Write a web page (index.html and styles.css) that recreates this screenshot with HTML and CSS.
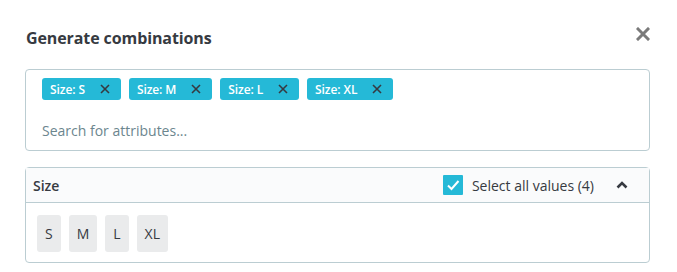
FILE: index.html
```html
<!DOCTYPE html>
<html>
<head>
<meta charset="utf-8">
<link rel="stylesheet" href="styles.css">
</head>
<body>
<div class="modal">
  <div class="head">
    <h2 class="title">Generate combinations</h2>
    <button class="close" aria-label="Close">
      <svg width="14" height="14" viewBox="0 0 14 14"><path d="M2 2 L12 12 M12 2 L2 12" stroke="#7a7a7a" stroke-width="3" stroke-linecap="square"/></svg>
    </button>
  </div>
  <div class="tagbox">
    <div class="tags">
      <span class="tag">Size: S<svg class="x" width="10" height="10" viewBox="0 0 10 10"><path d="M1 1 L9 9 M9 1 L1 9" stroke="#363a41" stroke-width="1.6"/></svg></span>
      <span class="tag">Size: M<svg class="x" width="10" height="10" viewBox="0 0 10 10"><path d="M1 1 L9 9 M9 1 L1 9" stroke="#363a41" stroke-width="1.6"/></svg></span>
      <span class="tag">Size: L<svg class="x" width="10" height="10" viewBox="0 0 10 10"><path d="M1 1 L9 9 M9 1 L1 9" stroke="#363a41" stroke-width="1.6"/></svg></span>
      <span class="tag">Size: XL<svg class="x" width="10" height="10" viewBox="0 0 10 10"><path d="M1 1 L9 9 M9 1 L1 9" stroke="#363a41" stroke-width="1.6"/></svg></span>
    </div>
    <div class="search">Search for attributes...</div>
  </div>
  <div class="card">
    <div class="card-head">
      <span class="card-title">Size</span>
      <div class="card-actions">
        <span class="check"><svg width="20" height="20" viewBox="0 0 20 20"><rect width="20" height="20" rx="1" fill="#25b9d7"/><path d="M5 10.5 L8.5 14 L15.5 6" stroke="#fff" stroke-width="2" fill="none"/></svg></span>
        <span class="check-label">Select all values (4)</span>
        <svg class="chev" width="14" height="10" viewBox="0 0 14 10"><path d="M2.5 7.5 L7 3 L11.5 7.5" stroke="#363a41" stroke-width="2.6" fill="none"/></svg>
      </div>
    </div>
    <div class="values">
      <span class="val">S</span>
      <span class="val">M</span>
      <span class="val">L</span>
      <span class="val">XL</span>
    </div>
  </div>
</div>
</body>
</html>
```
FILE: styles.css
```css
html, body { margin: 0; padding: 0; background: #fff; }
body { font-family: "Open Sans", "DejaVu Sans", sans-serif; color: #363a41; }
.modal { padding: 22px 27px 0 25px; }
.head { display: flex; justify-content: space-between; align-items: center; height: 30px; margin-bottom: 17px; }
.title { margin: 0 0 0 1px; font-size: 16px; font-weight: 700; color: #363a41; letter-spacing: -0.1px; padding-top: 2px; }
.close { border: 0; background: none; padding: 0; margin: -6px 0 0 0; width: 14px; height: 14px; display: block; }
.close svg { display: block; }
.tagbox { border: 1px solid #bbcdd2; border-radius: 4px; padding: 8px 16px 10px 16px; height: 62px; }
.tags { display: flex; gap: 8px; }
.tag { display: inline-flex; align-items: center; height: 22px; background: #25b9d7; color: #fff; border-radius: 3px; padding: 0 11px 0 8px; font-size: 12px; font-weight: 600; letter-spacing: -0.1px; }
.tag .x { margin-left: 15px; }
.search { margin-top: 21px; font-size: 14px; color: #6c868e; }
.card { margin-top: 16px; border: 1px solid #bbcdd2; border-radius: 4px; }
.card-head { display: flex; justify-content: space-between; align-items: center; height: 34px; background: #fafbfc; border-bottom: 1px solid #bbcdd2; padding: 0 20px 0 7px; }
.card-title { font-size: 14px; font-weight: 600; }
.card-actions { display: flex; align-items: center; }
.check { display: block; width: 20px; height: 20px; }
.check svg { display: block; }
.check-label { margin-left: 9px; font-size: 14px; }
.chev { margin-left: 21px; }
.values { display: flex; gap: 8px; padding: 12px 11px 10px; }
.val { display: flex; align-items: center; justify-content: center; height: 37px; padding: 0 8px; background: #eaebec; border-radius: 3px; font-size: 14px; }
```
